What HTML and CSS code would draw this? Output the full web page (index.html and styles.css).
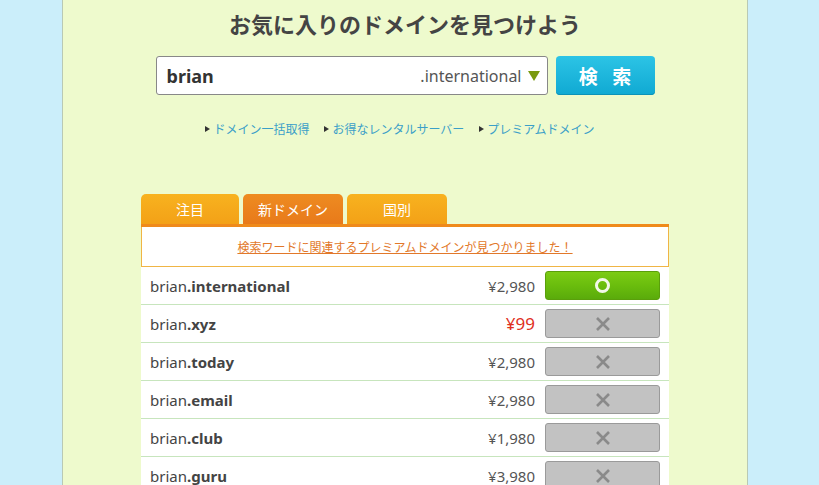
FILE: index.html
```html
<!DOCTYPE html>
<html lang="ja">
<head>
<meta charset="utf-8">
<link rel="stylesheet" href="styles.css">
</head>
<body>
<div class="panel">
  <h1 class="title">お気に入りのドメインを見つけよう</h1>
  <div class="search">
    <div class="input">
      <span class="query">brian</span>
      <span class="tld">.international</span>
      <svg class="caret" width="12" height="10" viewBox="0 0 12 10"><path d="M0 0H12L6 10Z" fill="#7a9a10"/></svg>
    </div>
    <div class="btn">検 索</div>
  </div>
  <div class="links">
    <a class="lnk"><span class="tri"></span>ドメイン一括取得</a>
    <a class="lnk"><span class="tri"></span>お得なレンタルサーバー</a>
    <a class="lnk"><span class="tri"></span>プレミアムドメイン</a>
  </div>
  <div class="result">
    <div class="tabs">
      <div class="tab">注目</div>
      <div class="tab active">新ドメイン</div>
      <div class="tab">国別</div>
    </div>
    <div class="notice"><a>検索ワードに関連するプレミアムドメインが見つかりました！</a></div>
    <div class="row">
      <div class="name">brian<b>.international</b></div>
      <div class="price">¥2,980</div>
      <div class="act ok"><span class="ring"></span></div>
    </div>
    <div class="row">
      <div class="name">brian<b>.xyz</b></div>
      <div class="price red">¥99</div>
      <div class="act ng"><svg width="16" height="16" viewBox="0 0 16 16"><path d="M2 2L14 14M14 2L2 14" stroke="#8a8a8a" stroke-width="2.6"/></svg></div>
    </div>
    <div class="row">
      <div class="name">brian<b>.today</b></div>
      <div class="price">¥2,980</div>
      <div class="act ng"><svg width="16" height="16" viewBox="0 0 16 16"><path d="M2 2L14 14M14 2L2 14" stroke="#8a8a8a" stroke-width="2.6"/></svg></div>
    </div>
    <div class="row">
      <div class="name">brian<b>.email</b></div>
      <div class="price">¥2,980</div>
      <div class="act ng"><svg width="16" height="16" viewBox="0 0 16 16"><path d="M2 2L14 14M14 2L2 14" stroke="#8a8a8a" stroke-width="2.6"/></svg></div>
    </div>
    <div class="row">
      <div class="name">brian<b>.club</b></div>
      <div class="price">¥1,980</div>
      <div class="act ng"><svg width="16" height="16" viewBox="0 0 16 16"><path d="M2 2L14 14M14 2L2 14" stroke="#8a8a8a" stroke-width="2.6"/></svg></div>
    </div>
    <div class="row">
      <div class="name">brian<b>.guru</b></div>
      <div class="price">¥3,980</div>
      <div class="act ng"><svg width="16" height="16" viewBox="0 0 16 16"><path d="M2 2L14 14M14 2L2 14" stroke="#8a8a8a" stroke-width="2.6"/></svg></div>
    </div>
  </div>
</div>
</body>
</html>
```
FILE: styles.css
```css
html, body {
  margin: 0;
  padding: 0;
  height: 100%;
  overflow: hidden;
}
body {
  background: #cbeefa;
  font-family: "Noto Sans", "Noto Sans CJK JP", sans-serif;
  color: #444;
}
.panel {
  margin-left: 62px;
  width: 684px;
  min-height: 100%;
  background: #eefacd;
  border-left: 1px solid #b9c9b4;
  border-right: 1px solid #b9c9b4;
  display: flex;
  flex-direction: column;
  align-items: center;
}
.title {
  margin: 8px 0 0;
  font-family: "Noto Sans CJK JP", sans-serif;
  font-size: 22px;
  line-height: 30px;
  font-weight: bold;
  color: #444;
}
.search {
  margin-top: 18px;
  display: flex;
  gap: 8px;
  height: 39px;
}
.input {
  width: 373px;
  height: 37px;
  background: #fff;
  border: 1px solid #888;
  border-radius: 3px;
  display: flex;
  align-items: center;
  padding: 0 7px 0 10px;
  box-sizing: content-box;
}
.query {
  font-weight: bold;
  font-size: 18px;
  color: #333;
  flex: 1;
}
.tld {
  font-size: 16px;
  color: #555;
  margin-right: 6px;
}
.caret { margin-top: 1px; }
.btn {
  width: 99px;
  height: 39px;
  border-radius: 4px;
  background: linear-gradient(#2cc4e6, #10a9d2);
  color: #fff;
  font-family: "Noto Sans CJK JP", sans-serif;
  font-weight: bold;
  font-size: 19px;
  letter-spacing: 5px;
  text-indent: 5px;
  display: flex;
  align-items: center;
  justify-content: center;
  box-shadow: inset 0 -1px 0 #0c92b8;
}
.links {
  margin-top: 24px;
  margin-right: 10px;
  display: flex;
  gap: 15px;
  font-family: "Noto Sans CJK JP", sans-serif;
  font-size: 12px;
  line-height: 20px;
}
.lnk {
  color: #3b9fc8;
  display: flex;
  align-items: center;
}
.tri {
  width: 0;
  height: 0;
  border-left: 5px solid #333;
  border-top: 3.5px solid transparent;
  border-bottom: 3.5px solid transparent;
  margin-right: 3px;
}
.result {
  margin-top: 55px;
  width: 528px;
}
.tabs {
  display: flex;
  gap: 4px;
  border-bottom: 3px solid #ef8a1b;
}
.tab {
  width: 98px;
  height: 30px;
  border-radius: 5px 5px 0 0;
  background: linear-gradient(#f8b21f, #f3a117);
  color: #fff;
  font-family: "Noto Sans CJK JP", sans-serif;
  font-size: 14px;
  display: flex;
  align-items: center;
  justify-content: center;
}
.tab.active {
  width: 100px;
  background: linear-gradient(#ee8b21, #e87a1a);
}
.tab:last-child { width: 100px; }
.notice {
  background: #fff;
  border: 1px solid #f0b545;
  border-top: none;
  height: 39px;
  display: flex;
  align-items: center;
  justify-content: center;
  font-family: "Noto Sans CJK JP", sans-serif;
  font-size: 12px;
}
.notice a {
  color: #e2782a;
  text-decoration: underline;
}
.row {
  background: #fff;
  height: 37px;
  border-bottom: 1px solid #c7e5bd;
  display: flex;
  align-items: center;
  padding: 0 9px;
  font-size: 15px;
}
.name {
  flex: 1;
  color: #444;
}
.name b { color: #444; }
.price {
  color: #555;
  margin-right: 10px;
}
.price.red {
  color: #e0301e;
  font-size: 17px;
}
.act {
  width: 113px;
  height: 27px;
  border-radius: 3px;
  display: flex;
  align-items: center;
  justify-content: center;
}
.ok {
  background: linear-gradient(#7ccb14 0%, #6abd0d 50%, #5aab0b 100%);
  border: 1px solid #5a9f0b;
}
.ring {
  width: 9px;
  height: 9px;
  border: 3px solid #f2f8e8;
  border-radius: 50%;
}
.ng {
  background: #c2c2c2;
  border: 1px solid #9a9a9a;
}
```
